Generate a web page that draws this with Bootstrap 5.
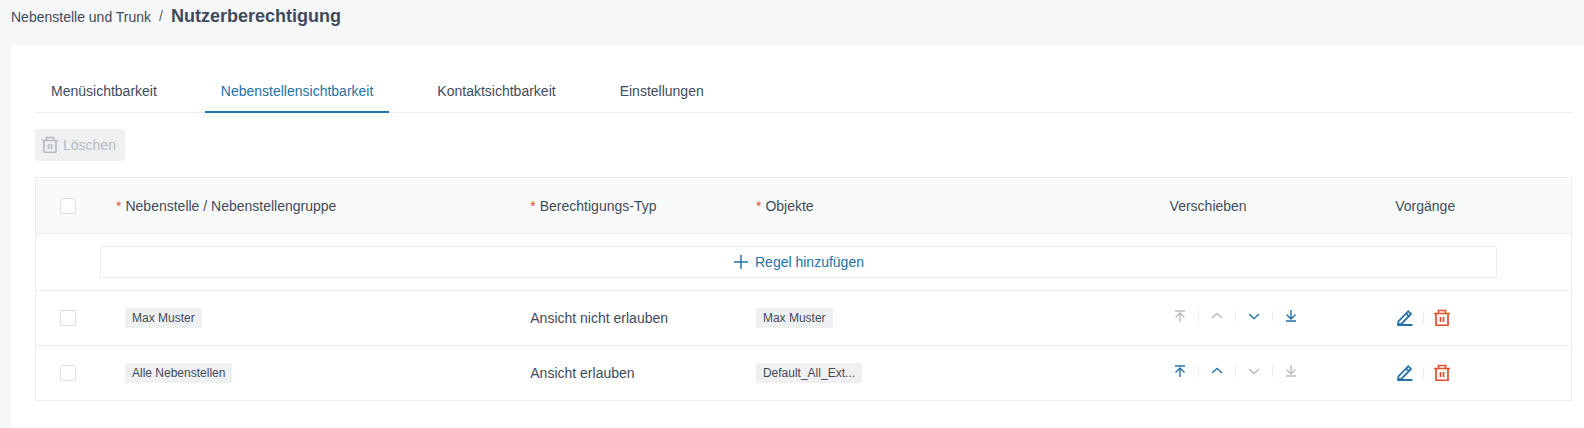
<!DOCTYPE html>
<html lang="de">
<head>
<meta charset="utf-8">
<meta name="viewport" content="width=device-width, initial-scale=1">
<title>Nutzerberechtigung</title>
<link rel="stylesheet" href="https://cdn.jsdelivr.net/npm/bootstrap@5.3.0/dist/css/bootstrap.min.css">
<style>
  :root { --ink: #3f4b5b; --accent: #2472a6; --line: #ebeef0; --chip: #eff0f2; --muted: #b6bcc2; --danger: #e64c2e; }
  body { font-family: "Liberation Sans", Arial, sans-serif; font-size: 14px; line-height: 20px; color: var(--ink); background: #f6f7f9; }
  .page-head { height: 45px; padding: 6px 11px 0; --bs-breadcrumb-divider-color: var(--ink); --bs-breadcrumb-item-padding-x: 8px; }
  .page-head a, .page-head h1 { color: var(--ink); }
  .page-head h1 { font-size: 18px; line-height: 20px; }
  .panel { margin-left: 11px; padding: 24px 12px 24px 24px; }
  .tabs { --bs-nav-link-color: var(--ink); --bs-nav-link-hover-color: var(--accent); gap: 32px; border-bottom: 1px solid var(--line); }
  .tabs .nav-link { padding: 12px 16px 10px; border-bottom: 2px solid transparent; margin-bottom: -1px; }
  .tabs .nav-link.active { color: var(--accent); border-color: var(--accent); }
  .tool-btn { height: 32px; padding: 0 8px 0 4px; gap: 3px; font-size: 14px; line-height: 20px; border-radius: 2px;
    --bs-btn-disabled-color: var(--muted); --bs-btn-disabled-bg: var(--chip); --bs-btn-disabled-border-color: var(--chip); --bs-btn-disabled-opacity: 1; }
  .rules { --bs-table-color: var(--ink); border: 1px solid var(--line); border-collapse: separate; border-spacing: 0; table-layout: fixed; }
  .rules > :not(caption) > * > * { padding: 0 12px; height: 55px; border-bottom: 1px solid var(--line); color: var(--ink); font-weight: 400; }
  .rules > thead > tr > th { height: 56px; background: #f9fbfb; vertical-align: middle; }
  .rules > tbody > tr:last-child > * { height: 54px; border-bottom: 0; }
  .rules > tbody > .add-row > td { height: 57px; padding: 0 74px 0 64px; }
  .c-check { width: 64px; } .c-wide { width: 27.25%; } .c-mid { width: 14.7%; } .c-obj { width: 26.95%; }
  .rules .form-check-input { display: block; width: 16px; height: 16px; margin: 0 0 0 12px; border: 1px solid #dcdfe3; border-radius: 2px; }
  .required::before { content: "*"; color: var(--danger); margin-right: 4px; }
  .rules .hang { padding-left: 16px; }
  .rules .indent { padding-left: 25px; }
  .add-btn { height: 32px; border: 1px solid var(--line); border-radius: 0; color: var(--accent); font-size: 14px; line-height: 20px; gap: 6px; }
  .chip { display: block; width: fit-content; height: 20px; padding: 0 7px; font-size: 12px; background: var(--chip); }
  .actions { color: var(--accent); gap: 8px; }
  .actions .btn { width: 20px; height: 20px; padding: 0; border: 0; color: inherit; display: flex; align-items: center; justify-content: center; }
  .actions .btn:disabled { color: var(--muted); opacity: 1; }
  .actions .btn.remove { color: var(--danger); }
  .actions .vr { height: 12px; min-height: 0; align-self: center; color: var(--line); opacity: 1; }
  .move { padding-bottom: 4px; }
  svg { display: block; fill: none; stroke: currentColor; flex: none; }
</style>
</head>
<body>
<svg width="0" height="0" class="position-absolute" aria-hidden="true">
  <symbol id="i-trash" viewBox="0 0 20 20"><path d="M2 5.500h16M6.500 5V2.500h7V5M4 5.500V17.250h12V5.500M8.500 9v5M11.500 9v5" stroke-width="1.700"/></symbol>
  <symbol id="i-edit" viewBox="0 0 20 20"><path d="M2.500 17h15M3 16.500l.4-3.200L13.300 3.200l2.700 2.700L6.400 15.900zM11 5.400l2.800 2.800" stroke-width="1.800"/></symbol>
  <symbol id="i-top" viewBox="0 0 20 20"><path d="M5 5h10M10 16V7.500M5.500 11.500L10 7l4.500 4.500" stroke-width="1.400"/></symbol>
  <symbol id="i-up" viewBox="0 0 20 20"><path d="M5 12l5-4.500 5 4.500" stroke-width="1.400"/></symbol>
  <symbol id="i-down" viewBox="0 0 20 20"><path d="M5 8l5 4.500L15 8" stroke-width="1.400"/></symbol>
  <symbol id="i-bottom" viewBox="0 0 20 20"><path d="M5 15h10M10 4v8.500M5.500 8.500L10 13l4.500-4.500" stroke-width="1.400"/></symbol>
  <symbol id="i-plus" viewBox="0 0 16 16"><path d="M8 1v14M1 8h14" stroke-width="1.500"/></symbol>
</svg>
<div class="d-flex flex-column min-vh-100">
  <header class="page-head">
    <nav aria-label="Brotkrumen">
      <ol class="breadcrumb mb-0 align-items-baseline">
        <li class="breadcrumb-item"><a href="#" class="text-decoration-none">Nebenstelle und Trunk</a></li>
        <li class="breadcrumb-item active" aria-current="page"><h1 class="d-inline fw-bold m-0">Nutzerberechtigung</h1></li>
      </ol>
    </nav>
  </header>
  <main class="panel bg-white flex-grow-1">
    <ul class="nav tabs mb-3">
      <li class="nav-item"><a class="nav-link" href="#">Menüsichtbarkeit</a></li>
      <li class="nav-item"><a class="nav-link active" aria-current="page" href="#">Nebenstellensichtbarkeit</a></li>
      <li class="nav-item"><a class="nav-link" href="#">Kontaktsichtbarkeit</a></li>
      <li class="nav-item"><a class="nav-link" href="#">Einstellungen</a></li>
    </ul>
    <button type="button" class="btn tool-btn d-flex align-items-center mb-3" disabled><svg width="20" height="20"><use href="#i-trash"/></svg>Löschen</button>
    <table class="table rules align-middle mb-0">
      <thead>
        <tr>
          <th class="c-check" scope="col"><input class="form-check-input" type="checkbox" aria-label="Alle auswählen"></th>
          <th class="c-wide hang" scope="col"><span class="required">Nebenstelle / Nebenstellengruppe</span></th>
          <th class="c-mid" scope="col"><span class="required">Berechtigungs-Typ</span></th>
          <th class="c-obj" scope="col"><span class="required">Objekte</span></th>
          <th class="c-mid" scope="col">Verschieben</th>
          <th scope="col">Vorgänge</th>
        </tr>
      </thead>
      <tbody>
        <tr class="add-row">
          <td colspan="6"><button type="button" class="btn add-btn w-100 d-flex align-items-center justify-content-center"><svg width="16" height="16"><use href="#i-plus"/></svg>Regel hinzufügen</button></td>
        </tr>
        <tr>
          <td><input class="form-check-input" type="checkbox" aria-label="Max Muster auswählen"></td>
          <td class="indent"><span class="chip">Max Muster</span></td>
          <td>Ansicht nicht erlauben</td>
          <td><span class="chip">Max Muster</span></td>
          <td>
            <div class="actions move d-flex">
              <button type="button" class="btn" aria-label="Ganz nach oben" disabled><svg width="20" height="20"><use href="#i-top"/></svg></button>
              <span class="vr"></span>
              <button type="button" class="btn" aria-label="Nach oben" disabled><svg width="20" height="20"><use href="#i-up"/></svg></button>
              <span class="vr"></span>
              <button type="button" class="btn" aria-label="Nach unten"><svg width="20" height="20"><use href="#i-down"/></svg></button>
              <span class="vr"></span>
              <button type="button" class="btn" aria-label="Ganz nach unten"><svg width="20" height="20"><use href="#i-bottom"/></svg></button>
            </div>
          </td>
          <td>
            <div class="actions d-flex">
              <button type="button" class="btn" aria-label="Bearbeiten"><svg width="20" height="20"><use href="#i-edit"/></svg></button>
              <span class="vr"></span>
              <button type="button" class="btn remove" aria-label="Löschen"><svg width="20" height="20"><use href="#i-trash"/></svg></button>
            </div>
          </td>
        </tr>
        <tr>
          <td><input class="form-check-input" type="checkbox" aria-label="Alle Nebenstellen auswählen"></td>
          <td class="indent"><span class="chip">Alle Nebenstellen</span></td>
          <td>Ansicht erlauben</td>
          <td><span class="chip">Default_All_Ext...</span></td>
          <td>
            <div class="actions move d-flex">
              <button type="button" class="btn" aria-label="Ganz nach oben"><svg width="20" height="20"><use href="#i-top"/></svg></button>
              <span class="vr"></span>
              <button type="button" class="btn" aria-label="Nach oben"><svg width="20" height="20"><use href="#i-up"/></svg></button>
              <span class="vr"></span>
              <button type="button" class="btn" aria-label="Nach unten" disabled><svg width="20" height="20"><use href="#i-down"/></svg></button>
              <span class="vr"></span>
              <button type="button" class="btn" aria-label="Ganz nach unten" disabled><svg width="20" height="20"><use href="#i-bottom"/></svg></button>
            </div>
          </td>
          <td>
            <div class="actions d-flex">
              <button type="button" class="btn" aria-label="Bearbeiten"><svg width="20" height="20"><use href="#i-edit"/></svg></button>
              <span class="vr"></span>
              <button type="button" class="btn remove" aria-label="Löschen"><svg width="20" height="20"><use href="#i-trash"/></svg></button>
            </div>
          </td>
        </tr>
      </tbody>
    </table>
  </main>
</div>
<script src="https://cdn.jsdelivr.net/npm/bootstrap@5.3.0/dist/js/bootstrap.bundle.min.js"></script>
</body>
</html>
